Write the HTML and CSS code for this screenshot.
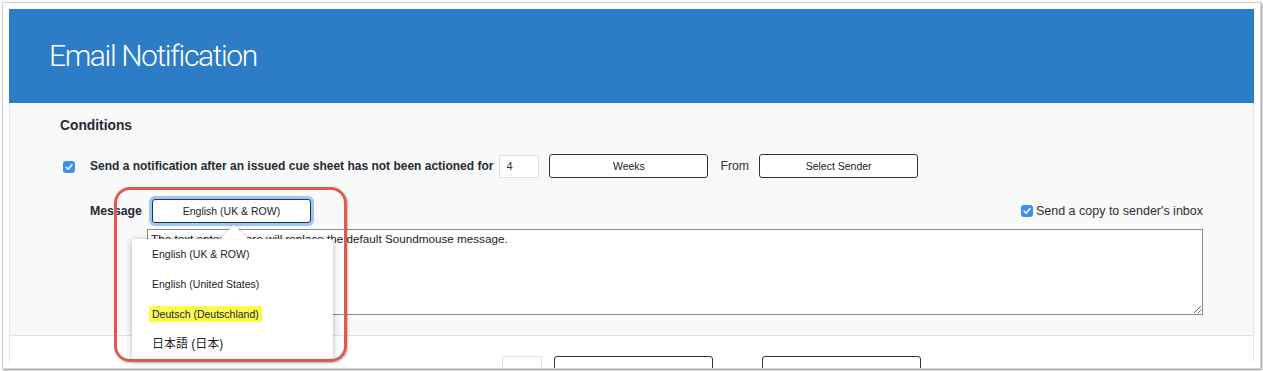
FILE: index.html
```html
<!DOCTYPE html>
<html lang="en">

<head>
    <meta charset="UTF-8">
    <meta name="viewport" content="width=device-width, initial-scale=1.0">
    <title>Email Notification</title>
    <link rel="stylesheet" href="styles.css">
</head>

<body>
    <div class="window">
        <div class="panel">
            <header class="panel_header">
                <h1>Email Notification</h1>
            </header>

            <!-- first rule, with the language menu opened -->
            <section class="conditions">
                <h2>Conditions</h2>
                <div class="rule_row">
                    <span class="check">
                        <svg width="12" height="12" viewBox="0 0 12 12"><path d="M3.2 6.3 L5.1 8.2 L8.9 3.9" /></svg>
                    </span>
                    <span class="rule_label">Send a notification after an issued cue sheet has not been actioned for</span>
                    <span class="num_input">4</span>
                    <button class="select_btn">Weeks</button>
                    <span class="from_label">From</span>
                    <button class="select_btn">Select Sender</button>
                </div>

                <div class="message_row">
                    <span class="msg_label">Message</span>
                    <div class="lang_wrap">
                        <button class="select_btn focused">English (UK &amp; ROW)</button>
                        <ul class="lang_menu">
                            <li>English (UK &amp; ROW)</li>
                            <li>English (United States)</li>
                            <li><mark>Deutsch (Deutschland)</mark></li>
                            <li class="cjk">日本語 (日本)</li>
                        </ul>
                    </div>
                    <label class="copy_label">
                        <span class="check">
                            <svg width="12" height="12" viewBox="0 0 12 12"><path d="M3.2 6.3 L5.1 8.2 L8.9 3.9" /></svg>
                        </span>
                        Send a copy to sender's inbox
                    </label>
                </div>
                <textarea class="message_text" readonly>The text entered here will replace the default Soundmouse message.</textarea>
            </section>

            <!-- next rule, mostly cut off by the window -->
            <section class="next_rule">
                <div class="next_row">
                    <span class="num_input"></span>
                    <button class="select_btn"></button>
                    <button class="select_btn"></button>
                </div>
            </section>
        </div>

        <!-- red highlight drawn over the screenshot -->
        <div class="annotation"></div>
    </div>
</body>

</html>
```

FILE: styles.css
```css
* {
    margin: 0;
    padding: 0;
    box-sizing: border-box;
    font-family: "Liberation Sans", Arial, Helvetica, sans-serif;
}

body {
    background-color: #fff;
    width: 1263px;
    height: 371px;
    overflow: hidden;
}

.window {
    position: relative;
    margin: 2px 0 0 2px;
    width: 1259px;
    height: 367px;
    padding: 6px;
    background-color: #fff;
    border: 1px solid #d4d4d4;
    box-shadow: 1px 1px 2px rgba(0, 0, 0, 0.45);
    overflow: hidden;
}

.panel {
    width: 1245px;
    height: 100%;
    border-left: 1px solid #e6e6e6;
    border-right: 1px solid #e6e6e6;
}

.panel_header {
    height: 94px;
    margin: 0 -1px;
    padding: 29px 0 0 40px;
    background-color: #2c7cc7;
}

.panel_header h1 {
    color: #fff;
    font-family: Roboto, "Liberation Sans", sans-serif;
    font-weight: 300;
    font-size: 30px;
    line-height: 36px;
    letter-spacing: -1.4px;
}

.conditions {
    background-color: #f9f9f9;
    padding: 13px 50px 20px 50px;
    border-bottom: 1px solid #e2e2e2;
    color: #262a33;
}

.conditions h2 {
    font-size: 13.8px;
    line-height: 20px;
    font-weight: bold;
}

.rule_row {
    display: flex;
    align-items: center;
    height: 24px;
    margin: 18px 0 0 3px;
}

.check {
    display: inline-flex;
    width: 12px;
    height: 12px;
    border-radius: 3px;
    background-color: #3b8ff1;
    flex-shrink: 0;
}

.check path {
    fill: none;
    stroke: #fff;
    stroke-width: 1.6;
    stroke-linecap: round;
    stroke-linejoin: round;
}

.rule_row .check {
    margin-right: 15px;
    margin-top: 1px;
}

.rule_label,
.msg_label {
    font-weight: bold;
    font-size: 12.3px;
}

.rule_label {
    font-size: 12px;
    margin-right: 6px;
}

.num_input {
    width: 40px;
    height: 23px;
    padding-left: 6px;
    border: 1px solid #e0e0e0;
    background-color: #fff;
    font-size: 11px;
    line-height: 21px;
    color: #333;
}

.select_btn {
    width: 159px;
    height: 24px;
    border: 1px solid #27334f;
    border-radius: 3px;
    background-color: #fff;
    color: #222;
    font-size: 10.5px;
}

.rule_row .num_input {
    margin-right: 10px;
}

.from_label {
    font-size: 12.3px;
    color: #3a3434;
    margin: 0 10px 0 12px;
}

.message_row {
    display: flex;
    align-items: center;
    height: 24px;
    margin: 21px 0 0 30px;
}

.msg_label {
    margin-right: 10px;
}

.lang_wrap {
    position: relative;
}

.select_btn.focused {
    box-shadow: 0 0 0 3px #9ac6f8;
}

.lang_menu {
    position: absolute;
    z-index: 2;
    left: -20px;
    top: 40px;
    width: 201px;
    list-style: none;
    background-color: #fff;
    border-radius: 3px;
    box-shadow: 0 1px 6px rgba(0, 0, 0, 0.3);
}

.lang_menu::before {
    content: "";
    position: absolute;
    left: 92px;
    top: -10px;
    width: 20px;
    height: 20px;
    background-color: #fff;
    transform: rotate(45deg);
    box-shadow: -1px -1px 2px rgba(0, 0, 0, 0.12);
}

.lang_menu li {
    position: relative;
    height: 30px;
    line-height: 30px;
    padding-left: 20px;
    font-size: 10.5px;
    color: #222;
}

.lang_menu mark {
    background-color: #fbfb4e;
    padding: 2px 3px;
    margin-left: -3px;
    color: #222;
}

.lang_menu li.cjk {
    font-family: "Liberation Sans", "Noto Sans CJK JP", sans-serif;
    font-size: 12px;
}

.copy_label {
    display: flex;
    align-items: center;
    margin-left: auto;
    font-size: 12.5px;
    color: #2f2f2f;
}

.copy_label .check {
    margin-right: 3px;
}

.message_text {
    display: block;
    width: 1056px;
    height: 86px;
    margin: 6px 0 0 87px;
    padding: 2px 3px;
    border: 1px solid #8d8d8d;
    background-color: #fff;
    font-size: 11.7px;
    color: #222;
    outline: none;
}

.next_rule {
    padding: 20px 50px 0 50px;
}

.next_row {
    display: flex;
    margin-left: 442px;
}

.next_row .num_input {
    margin-right: 12px;
}

.next_row .select_btn:last-child {
    margin-left: 49px;
}

.annotation {
    position: absolute;
    z-index: 3;
    left: 111px;
    top: 184px;
    width: 233px;
    height: 175px;
    border: 3px solid #dc5b4c;
    border-radius: 16px;
    box-shadow: 1px 1px 2px rgba(0, 0, 0, 0.25);
}
```
